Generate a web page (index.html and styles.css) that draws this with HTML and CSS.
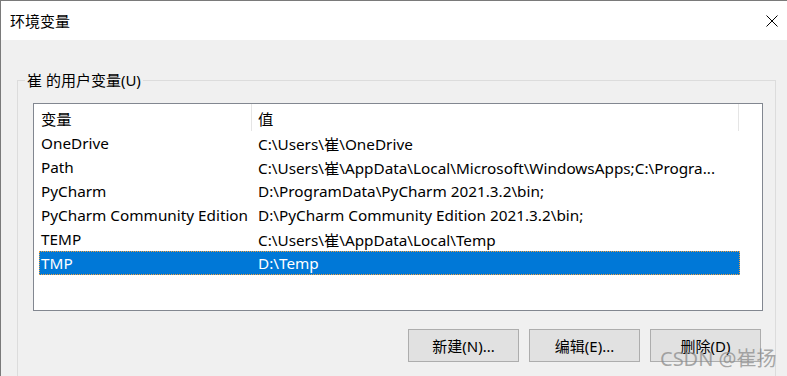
FILE: index.html
```html
<!DOCTYPE html>
<html lang="zh-CN">
<head>
  <meta charset="UTF-8">
  <title>环境变量</title>
  <link rel="stylesheet" href="styles.css">
</head>
<body>
  <div class="window">
    <!-- 标题栏 -->
    <div class="titlebar">
      <span class="title">环境变量</span>
      <svg class="close" width="12" height="12" viewBox="0 0 12 12">
        <path d="M0.5 0.5 L11.5 11.5 M11.5 0.5 L0.5 11.5" stroke="#000" stroke-width="1" fill="none"/>
      </svg>
    </div>

    <div class="content">
      <fieldset class="group">
        <legend>崔 的用户变量(U)</legend>

        <!-- 变量列表 -->
        <div class="listview">
          <div class="list-header">
            <div class="col-name">变量</div>
            <div class="col-value">值</div>
          </div>
          <div class="row"><div class="col-name">OneDrive</div><div class="col-value">C:\Users\崔\OneDrive</div></div>
          <div class="row"><div class="col-name">Path</div><div class="col-value">C:\Users\崔\AppData\Local\Microsoft\WindowsApps;C:\Progra...</div></div>
          <div class="row"><div class="col-name">PyCharm</div><div class="col-value">D:\ProgramData\PyCharm 2021.3.2\bin;</div></div>
          <div class="row"><div class="col-name">PyCharm Community Edition</div><div class="col-value">D:\PyCharm Community Edition 2021.3.2\bin;</div></div>
          <div class="row"><div class="col-name">TEMP</div><div class="col-value">C:\Users\崔\AppData\Local\Temp</div></div>
          <div class="row selected"><div class="col-name">TMP</div><div class="col-value">D:\Temp</div></div>
        </div>

        <div class="buttons">
          <button class="btn">新建(N)...</button>
          <button class="btn">编辑(E)...</button>
          <button class="btn">删除(D)</button>
        </div>
      </fieldset>
    </div>

    <div class="watermark">CSDN @崔扬</div>
  </div>
</body>
</html>
```

FILE: styles.css
```css
body {
  margin: 0;
  font-family: "Noto Sans", "Noto Sans CJK SC", sans-serif;
  font-size: 15px;
  color: #000;
  background-color: #f0f0f0;
}

.window {
  position: relative;
  width: 786px;
  height: 375px;
  border-top: 1px solid #7a7a7a;
  border-left: 1px solid #7a7a7a;
  background-color: #f0f0f0;
  overflow: hidden;
}

/* 标题栏 */
.titlebar {
  height: 39px;
  background-color: #fff;
  display: flex;
  align-items: center;
  padding: 0 9px;
}

.title {
  flex: 1;
  line-height: 20px;
}

/* 主体 */
.content {
  padding: 30px 0 0 16px;
}

.group {
  width: 759px;
  height: 330px;
  margin: 0;
  padding: 0;
  border: 1px solid #dcdcdc;
  box-sizing: border-box;
}

.group legend {
  margin-left: 7px;
  padding: 0 2px;
  line-height: 20px;
}

/* 列表 */
.listview {
  width: 730px;
  height: 208px;
  margin: 13px 0 0 15px;
  border: 1px solid #828790;
  background-color: #fff;
  box-sizing: border-box;
  font-size: 15.3px;
}

.list-header {
  display: flex;
  height: 27px;
  align-items: stretch;
}

.list-header .col-name {
  width: 210px;
  padding-left: 7px;
  border-right: 1px solid #e5e5e5;
  display: flex;
  align-items: center;
}

.list-header .col-value {
  width: 480px;
  padding-left: 6px;
  border-right: 1px solid #e5e5e5;
  display: flex;
  align-items: center;
}

.row {
  display: flex;
  align-items: center;
  height: 24px;
  width: 701px;
  margin-left: 5px;
  box-sizing: border-box;
  white-space: nowrap;
}

.row .col-name {
  width: 217px;
  padding-left: 2px;
}

.row .col-value {
  width: 482px;
}

.row.selected {
  background-color: #0078d7;
  color: #fff;
  outline: 1px dotted #f0a040;
  outline-offset: -1px;
}

/* 按钮 */
.buttons {
  display: flex;
  justify-content: flex-end;
  gap: 10px;
  margin: 18px 14px 0 0;
}

.btn {
  width: 111px;
  height: 33px;
  font-family: inherit;
  font-size: 15px;
  color: #000;
  background-color: #e1e1e1;
  border: 1px solid #adadad;
  padding: 0;
}

.watermark {
  position: absolute;
  left: 659px;
  top: 342px;
  font-size: 20px;
  color: rgba(140, 140, 140, 0.75);
  white-space: nowrap;
}
```
